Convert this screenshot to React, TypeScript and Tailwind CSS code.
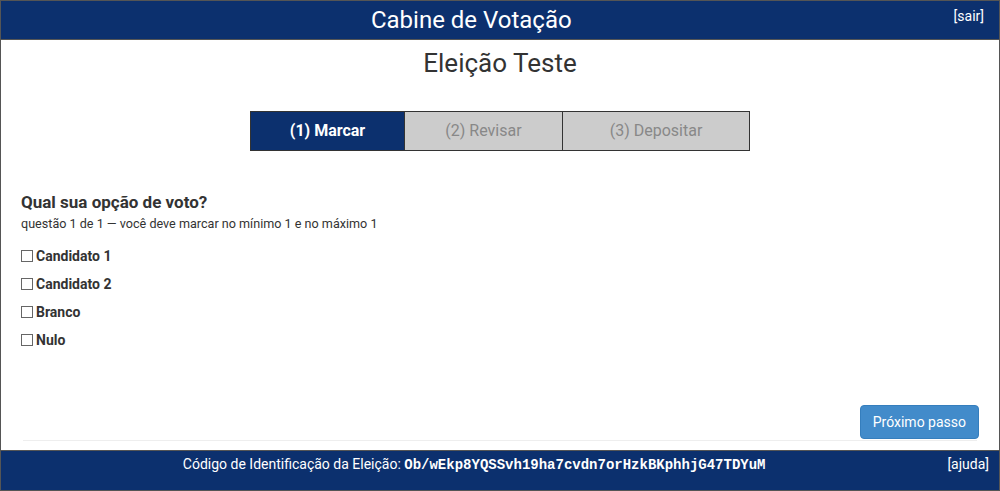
import React from "react";

const options = ["Candidato 1", "Candidato 2", "Branco", "Nulo"];

export default function App() {
  return (
    <div
      className="flex flex-col h-[491px] w-[1000px] border border-[#555] bg-white text-[#333]"
      style={{ fontFamily: "Roboto, 'Liberation Sans', sans-serif" }}
    >
      <header className="flex items-center h-[39px] bg-[#0c306e] border-b border-[#555] text-white shrink-0">
        <div className="flex-1 text-center text-[24px] leading-none pr-[12px]">
          Cabine de Votação
        </div>
        <a href="#" className="text-[14px] pr-[15px] -mt-[8px]">
          [sair]
        </a>
      </header>

      <main className="flex flex-col flex-1 px-[20px]">
        <h1 className="text-center text-[26px] leading-none mt-[10px]">
          Eleição Teste
        </h1>

        <div className="flex justify-center mt-[35px]">
          <div className="flex h-[40px] border border-[#333] text-[16px]">
            <div className="w-[154px] flex items-center justify-center bg-[#0c306e] text-white font-bold border-r border-[#333]">
              (1) Marcar
            </div>
            <div className="w-[158px] flex items-center justify-center bg-[#ccc] text-[#888] border-r border-[#333]">
              (2) Revisar
            </div>
            <div className="w-[186px] flex items-center justify-center bg-[#ccc] text-[#888]">
              (3) Depositar
            </div>
          </div>
        </div>

        <h2 className="text-[17px] font-bold mt-[43px] leading-none">
          Qual sua opção de voto?
        </h2>
        <p className="text-[12.6px] mt-[7px] leading-none">
          questão 1 de 1 — você deve marcar no mínimo 1 e no máximo 1
        </p>

        <div className="flex flex-col gap-[11px] mt-[17px]">
          {options.map((o) => (
            <label key={o} className="flex items-center gap-[3px] text-[14px] font-bold h-[17px]">
              <span className="w-[12px] h-[12px] border border-[#666] bg-white" />
              {o}
            </label>
          ))}
        </div>

        <div className="flex-1" />
        <div className="flex justify-end">
          <button className="bg-[#428bca] text-white text-[14px] rounded-[4px] px-[12px] h-[34px] border border-[#357ebd]">
            Próximo passo
          </button>
        </div>
        <hr className="border-t border-[#eee] mt-[1px] mb-[9px] mx-[2px]" />
      </main>

      <footer className="flex items-start h-[40px] bg-[#0c306e] border-t border-[#555] text-white text-[14px] shrink-0 pt-[3px]">
        <div className="flex-1 text-center">
          Código de Identificação da Eleição:{" "}
          <span
            className="font-bold"
            style={{ fontFamily: "'Liberation Mono', monospace" }}
          >
            Ob/wEkp8YQSSvh19ha7cvdn7orHzkBKphhjG47TDYuM
          </span>
        </div>
        <a href="#" className="pr-[10px]">
          [ajuda]
        </a>
      </footer>
    </div>
  );
}
